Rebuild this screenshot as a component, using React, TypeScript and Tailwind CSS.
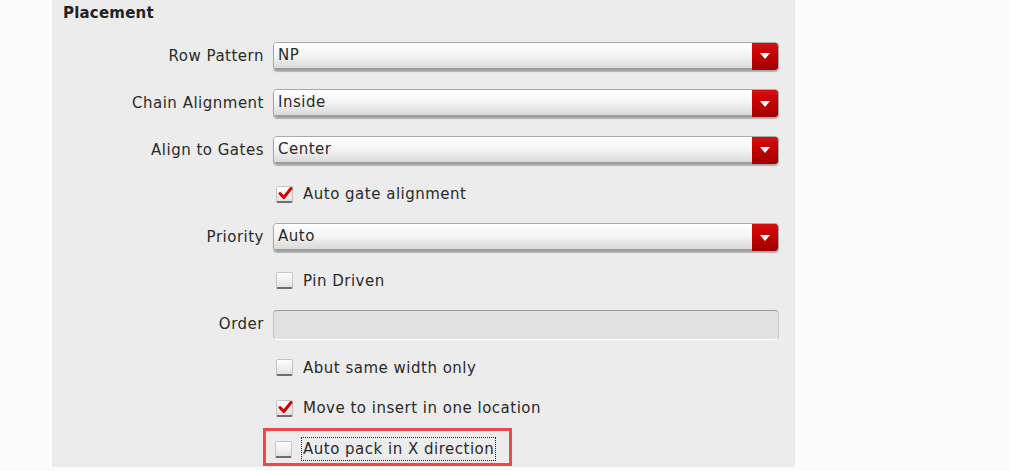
import React from "react";

const font = { fontFamily: "'DejaVu Sans', 'Liberation Sans', sans-serif" };

function Select({ value }: { value: string }) {
  return (
    <div className="flex h-[29px] w-[506px] rounded-[4px] border border-[#a9a9a9] shadow-[0_1px_1px_rgba(0,0,0,0.25)] overflow-hidden">
      <div className="flex flex-1 items-center pl-[4px] text-[15px] tracking-[0.5px] text-[#2a2a2a] bg-gradient-to-b from-[#ffffff] via-[#f4f4f4] to-[#d9d9d9] border-b-2 border-[#9c9c9c]">
        {value}
      </div>
      <div className="flex w-[26px] items-center justify-center bg-gradient-to-b from-[#d41010] via-[#c20000] to-[#9e0000]">
        <svg width="10" height="6" viewBox="0 0 10 6">
          <polygon points="0,0 10,0 5,6" fill="#ffffff" />
        </svg>
      </div>
    </div>
  );
}

function Check({ checked, label, focus }: { checked?: boolean; label: string; focus?: boolean }) {
  return (
    <div className="flex items-center gap-[10px]">
      <div className="relative h-[17px] w-[17px] rounded-[2px] border border-[#c4c4c4] border-b-2 border-b-[#6e6e6e] bg-gradient-to-b from-[#ffffff] to-[#e2e2e2]">
        {checked && (
          <svg className="absolute left-[1px] top-[-1px]" width="15" height="15" viewBox="0 0 15 15">
            <path d="M2 7.5 L5.8 11.5 L13 2.5" stroke="#d40000" strokeWidth="3" fill="none" strokeLinecap="round" strokeLinejoin="round" />
          </svg>
        )}
      </div>
      <span
        className={
          "text-[15px] tracking-[0.5px] text-[#2a2a2a] leading-[22px] " +
          (focus ? "outline outline-1 outline-dotted outline-[#222] px-[1px]" : "")
        }
      >
        {label}
      </span>
    </div>
  );
}

function Row({ label, h, children }: { label?: string; h: string; children: React.ReactNode }) {
  return (
    <div className={"flex shrink-0 items-center " + h}>
      <div className="w-[221px] pr-[9px] text-right text-[15px] tracking-[0.5px] text-[#2a2a2a]">{label}</div>
      <div className="flex items-center">{children}</div>
    </div>
  );
}

export default function App() {
  return (
    <div className="h-[471px] w-[1009px] bg-[#fbfbfb] overflow-hidden" style={font}>
      <div className="ml-[52px] flex h-[467px] w-[743px] flex-col overflow-hidden bg-[#ececec]">
        <div className="h-[33px] shrink-0 pl-[11px] pt-[2px] text-[15px] font-bold tracking-[0.2px] text-[#222]">Placement</div>
        <Row label="Row Pattern" h="h-[46px]">
          <Select value="NP" />
        </Row>
        <Row label="Chain Alignment" h="h-[49px]">
          <Select value="Inside" />
        </Row>
        <Row label="Align to Gates" h="h-[44px]">
          <Select value="Center" />
        </Row>
        <Row h="h-[44px]">
          <div className="pl-[3px]">
            <Check checked label="Auto gate alignment" />
          </div>
        </Row>
        <Row label="Priority" h="h-[43px]">
          <Select value="Auto" />
        </Row>
        <Row h="h-[43px]">
          <div className="pl-[3px]">
            <Check label="Pin Driven" />
          </div>
        </Row>
        <Row label="Order" h="h-[45px]">
          <div className="h-[30px] w-[506px] rounded-[4px] border border-[#c8c8c8] border-t-[#9a9a9a] border-b-[#ffffff] bg-[#e1e1e1]" />
        </Row>
        <Row h="h-[41px]">
          <div className="pl-[3px]">
            <Check label="Abut same width only" />
          </div>
        </Row>
        <Row h="h-[40px]">
          <div className="pl-[3px]">
            <Check checked label="Move to insert in one location" />
          </div>
        </Row>
        <div className="flex h-[44px] shrink-0 items-start">
          <div className="ml-[211px] flex h-[38px] w-[249px] items-center border-[3px] border-[#f04848] pl-[9px] pt-[4px]">
            <Check label="Auto pack in X direction" focus />
          </div>
        </div>
      </div>
    </div>
  );
}
